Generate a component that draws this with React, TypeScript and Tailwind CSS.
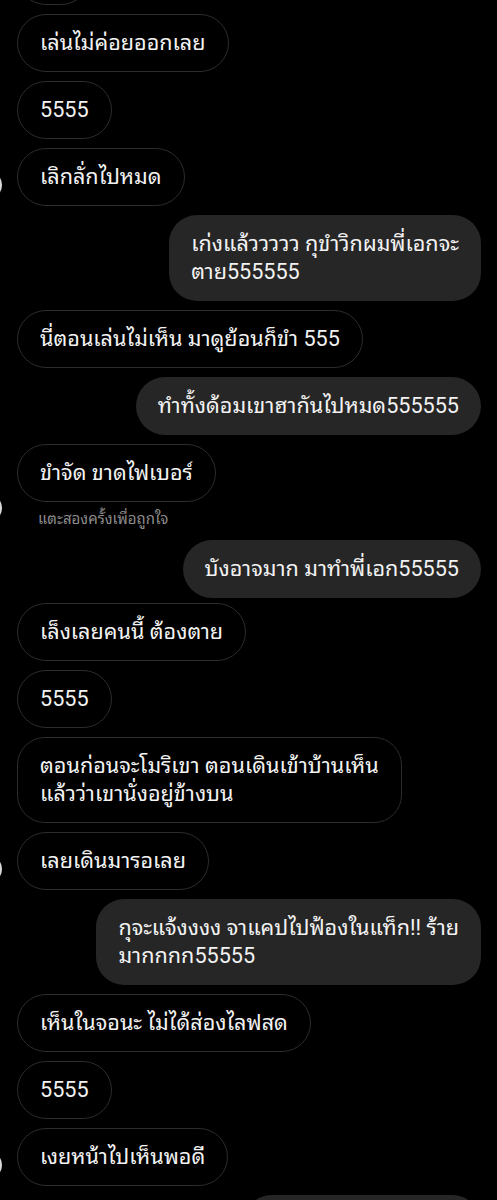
import React from "react";

type Msg = {
  side: "l" | "r";
  lines: string[];
  mt?: string;
  avatar?: boolean;
  caption?: string;
};

const msgs: Msg[] = [
  { side: "l", lines: ["เล่นไม่ค่อยออกเลย"], mt: "mt-[9px]" },
  { side: "l", lines: ["5555"] },
  { side: "l", lines: ["เลิกลั่กไปหมด"], avatar: true },
  { side: "r", lines: ["เก่งแล้ววววว กุขำวิกผมพี่เอกจะ", "ตาย555555"] },
  { side: "l", lines: ["นี่ตอนเล่นไม่เห็น มาดูย้อนก็ขำ 555"] },
  { side: "r", lines: ["ทำทั้งด้อมเขาฮากันไปหมด555555"] },
  { side: "l", lines: ["ขำจัด ขาดไฟเบอร์"], avatar: true, caption: "แตะสองครั้งเพื่อถูกใจ" },
  { side: "r", lines: ["บังอาจมาก มาทำพี่เอก55555"], mt: "mt-[11px]" },
  { side: "l", lines: ["เล็งเลยคนนี้ ต้องตาย"], mt: "mt-[5px]" },
  { side: "l", lines: ["5555"] },
  { side: "l", lines: ["ตอนก่อนจะโมริเขา ตอนเดินเข้าบ้านเห็น", "แล้วว่าเขานั่งอยู่ข้างบน"] },
  { side: "l", lines: ["เลยเดินมารอเลย"], avatar: true },
  { side: "r", lines: ["กุจะแจ้งงงง จาแคปไปฟ้องในแท็ก!! ร้าย", "มากกกก55555"] },
  { side: "l", lines: ["เห็นในจอนะ ไม่ได้ส่องไลฟสด"] },
  { side: "l", lines: ["5555"] },
  { side: "l", lines: ["เงยหน้าไปเห็นพอดี"], avatar: true },
];

function Bubble({ m }: { m: Msg }) {
  const multi = m.lines.length > 1;
  const shape = multi ? "rounded-[28px] h-[86px]" : "rounded-full h-[58px]";
  const sideCls =
    m.side === "l"
      ? "self-start ml-[17px] border border-[#2c2c2c] bg-black"
      : "self-end mr-[16px] bg-[#262626]";
  return (
    <div className={`relative flex flex-col ${m.side === "l" ? "items-start" : "items-end"} ${m.mt ?? "mt-[9px]"}`}>
      <div
        className={`relative flex flex-col justify-center ${sideCls} ${shape} px-[22px] text-[21.6px] text-[#f2f2f2] whitespace-nowrap`}
      >
        {m.lines.map((l, i) => (
          <div key={i} className="flex h-[28px] items-center leading-[28px]">
            {l}
          </div>
        ))}
      </div>
      {m.avatar && (
        <div className="absolute left-[-26px] bottom-[7px] h-[28px] w-[28px] rounded-full bg-[#d9d9d9]" />
      )}
      {m.caption && (
        <div className="ml-[38px] mt-[7px] h-[20px] text-[15px] leading-[20px] text-[#8c8c8c]">{m.caption}</div>
      )}
    </div>
  );
}

export default function App() {
  return (
    <div
      className="h-[1200px] w-[497px] overflow-hidden bg-black"
      style={{ fontFamily: 'Roboto, "Noto Sans Thai Looped", "Noto Sans Thai", "Noto Sans", sans-serif' }}
    >
      <div className="flex flex-col">
        <div className="mt-[-53px] ml-[17px] h-[58px] w-[73px] rounded-full border border-[#2c2c2c] bg-black" />
        {msgs.map((m, i) => (
          <Bubble key={i} m={m} />
        ))}
        <div className="mt-[9px] mr-[16px] h-[58px] w-[238px] self-end rounded-full bg-[#262626]" />
      </div>
    </div>
  );
}
